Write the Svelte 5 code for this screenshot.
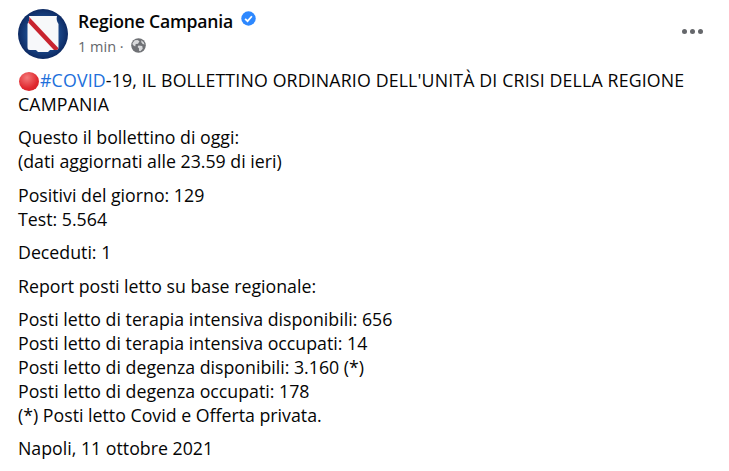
<script>
  const paragraphs = [
    ["Questo il bollettino di oggi:", "(dati aggiornati alle 23.59 di ieri)"],
    ["Positivi del giorno: 129", "Test: 5.564"],
    ["Deceduti: 1"],
    ["Report posti letto su base regionale:"],
    [
      "Posti letto di terapia intensiva disponibili: 656",
      "Posti letto di terapia intensiva occupati: 14",
      "Posti letto di degenza disponibili: 3.160 (*)",
      "Posti letto di degenza occupati: 178",
      "(*) Posti letto Covid e Offerta privata."
    ],
    ["Napoli, 11 ottobre 2021"]
  ];
</script>

<div class="post">
  <header class="head">
    <svg class="avatar" viewBox="0 0 50 50" aria-hidden="true">
      <defs>
        <radialGradient id="rg" cx="50%" cy="50%" r="50%">
          <stop offset="0.6" stop-color="#1c4a8c" />
          <stop offset="1" stop-color="#0d2a63" />
        </radialGradient>
        <clipPath id="shield">
          <path d="M11 7 H39 C38 11 39.5 13 40.5 15 V38 C40.5 40 40 41 38 41 H32 L30 43 H20 L18 41 H12 C10 41 9.5 40 9.5 38 V15 C10.5 13 12 11 11 7 Z" />
        </clipPath>
      </defs>
      <circle cx="25" cy="25" r="25" fill="url(#rg)" />
      <path d="M11 7 H39 C38 11 39.5 13 40.5 15 V38 C40.5 40 40 41 38 41 H32 L30 43 H20 L18 41 H12 C10 41 9.5 40 9.5 38 V15 C10.5 13 12 11 11 7 Z" fill="#f7f8fa" />
      <path d="M9 9 L41 43" stroke="#c8242f" stroke-width="4.6" clip-path="url(#shield)" />
    </svg>
    <div class="meta">
      <div class="name-row">
        <span class="name">Regione Campania</span>
        <svg class="badge" viewBox="0 0 16 16" aria-hidden="true">
          <circle cx="8" cy="8" r="7.7" fill="#2d88ff" />
          <path d="M4.4 8.3 L7 10.8 L11.6 5.6" fill="none" stroke="#fff" stroke-width="1.9" />
        </svg>
      </div>
      <div class="sub">
        <span>1 min ·</span>
        <svg class="globe" viewBox="0 0 16 16" aria-hidden="true">
          <circle cx="8" cy="8" r="7.8" fill="#6f7175" />
          <path d="M4 2.5 L7 2 L9 3.5 L7.5 6 L5 6.5 L4.5 9 L2 7.5 L1.5 5.5 Z M8 8 L12 8.5 L12.5 11.5 L10 14 L8.5 13.5 L8.5 11 L7 9.5 Z M11 2.5 L13.5 4.5 L14.5 7 L12.5 6.5 L11 4.5 Z" fill="#d8d9db" />
        </svg>
      </div>
    </div>
    <div class="more" aria-hidden="true"><i></i><i></i><i></i></div>
  </header>

  <div class="body">
    <p class="lead"><span class="dot"></span><span class="tag">#COVID</span>-19, IL BOLLETTINO ORDINARIO DELL'UNITÀ DI CRISI DELLA REGIONE CAMPANIA</p>
    {#each paragraphs as lines}
      <p>
        {#each lines as line, i}
          {#if i > 0}<br />{/if}{line}
        {/each}
      </p>
    {/each}
  </div>
</div>

<style>
  :global(body) {
    margin: 0;
    background: #fff;
  }
  .post {
    width: 729px;
    height: 471px;
    overflow: hidden;
    box-sizing: border-box;
    padding: 9px 18px 0;
    background: #fff;
    color: #050505;
    font-family: "Open Sans", "Noto Sans", sans-serif;
  }
  .head {
    display: flex;
    align-items: flex-start;
    gap: 10px;
    height: 53px;
  }
  .avatar {
    width: 50px;
    height: 50px;
    flex: none;
  }
  .meta {
    flex: 1;
    padding-top: 2px;
  }
  .name-row {
    display: flex;
    align-items: center;
    gap: 8px;
    height: 20px;
  }
  .name {
    font-size: 17.6px;
    font-weight: 600;
    letter-spacing: -0.2px;
  }
  .badge {
    width: 15px;
    height: 15px;
    margin-top: -5px;
  }
  .sub {
    display: flex;
    align-items: center;
    gap: 7px;
    margin-top: 5px;
    height: 20px;
    font-size: 14.5px;
    color: #65676b;
  }
  .globe {
    width: 15px;
    height: 15px;
    margin-top: -1px;
  }
  .more {
    display: flex;
    gap: 3px;
    margin: 20px 8px 0 0;
  }
  .more i {
    width: 5px;
    height: 5px;
    border-radius: 50%;
    background: #65676b;
  }
  .body {
    margin-top: 6px;
    font-size: 17.75px;
    line-height: 24px;
  }
  p {
    margin: 0 0 9.4px;
  }
  .lead {
    margin-right: 20px;
    letter-spacing: 0.15px;
  }
  .tag {
    color: #216fdb;
  }
  .dot {
    display: inline-block;
    width: 20px;
    height: 19px;
    border-radius: 50%;
    margin: 0 1px 0 1px;
    vertical-align: -4px;
    background: radial-gradient(circle at 40% 30%, #f47a7a, #e0282e 60%, #c81e24);
  }
</style>
